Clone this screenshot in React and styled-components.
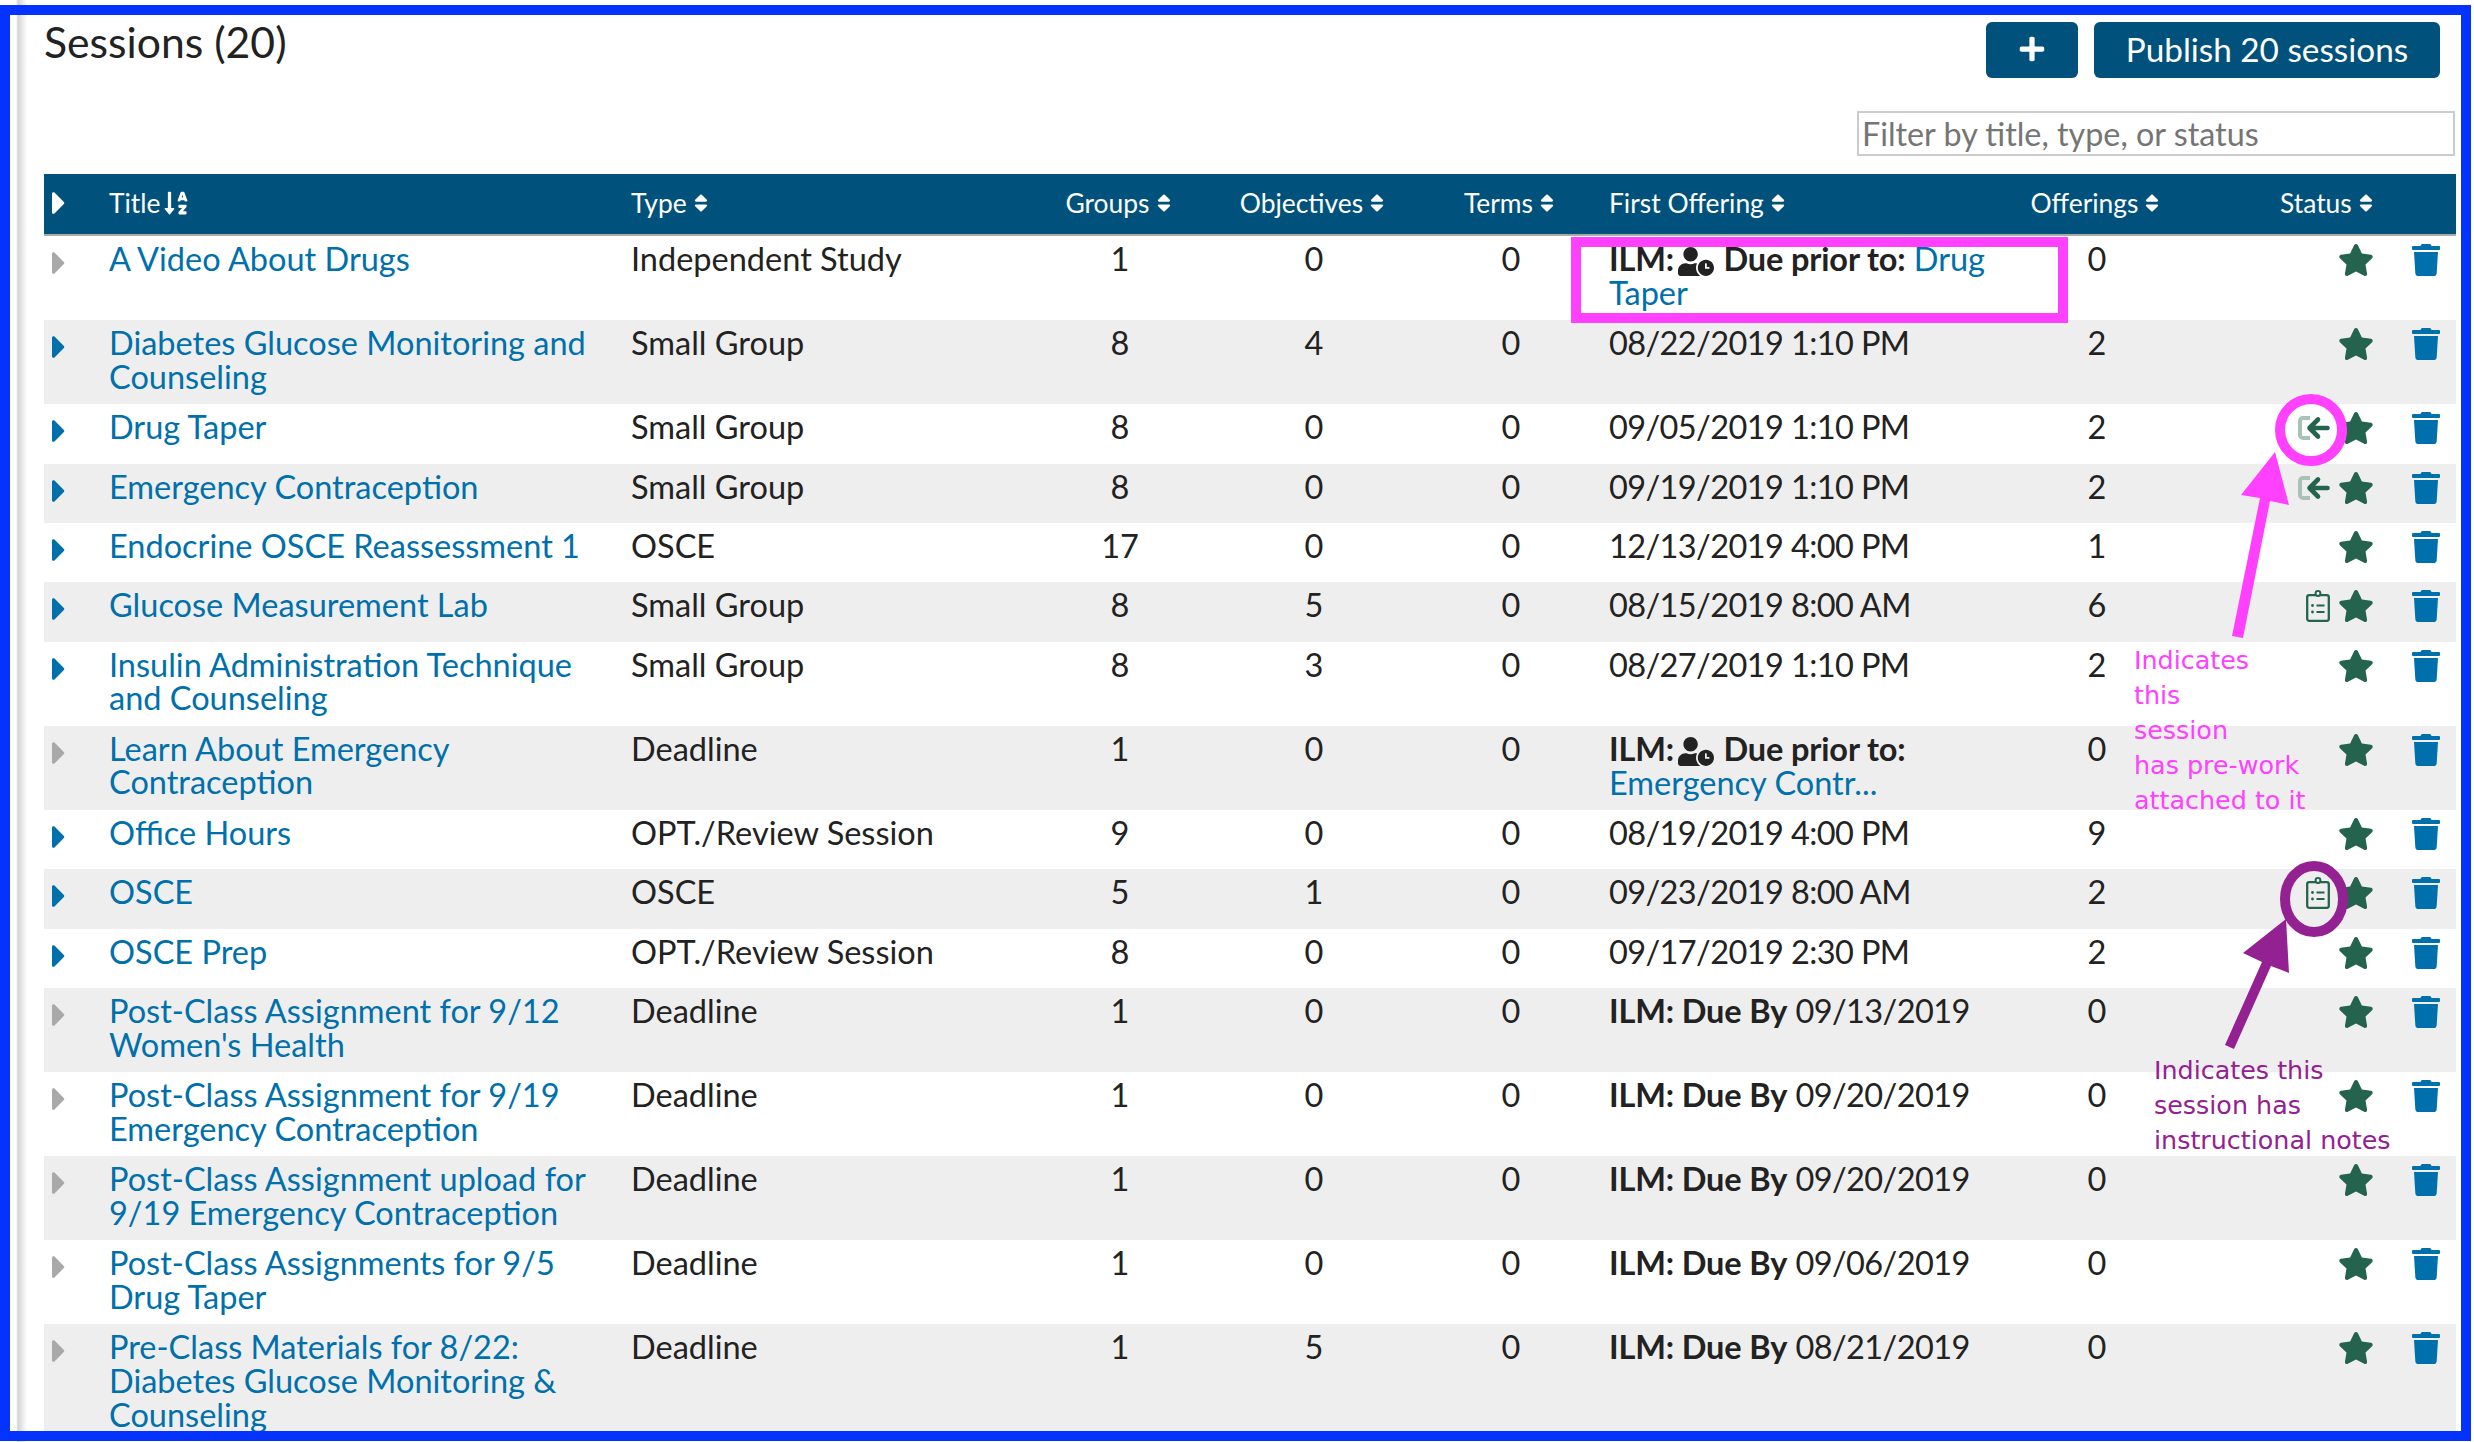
import React from 'react';
import styled, { createGlobalStyle } from 'styled-components';
import { FaCaretRight, FaPlus, FaSort, FaSortAlphaDown, FaStar, FaTrash, FaUserClock } from 'react-icons/fa';

const blue = '#00527c';
const link = '#0070ad';
const green = '#24634d';

const GlobalStyle = createGlobalStyle`
    html, body {
        margin: 0;
        padding: 0;
        background: #fff;
    }
    body {
        font-family: "Lato", "Noto Sans", sans-serif;
        color: #222;
    }
`;

const Page = styled.div`
    position: relative;
    width: 2474px;
    height: 1442px;
    padding-top: 5px;
    box-sizing: border-box;
    overflow: hidden;
    background: linear-gradient(to right, #fff 16px, #d4d4d4 18px, #fff 27px);
`;

const Frame = styled.div`
    width: 2471px;
    height: 1436px;
    box-sizing: border-box;
    border: 10px solid #0433ff;
    padding: 7px 5px 0 34px;
    overflow: hidden;
    background: linear-gradient(to right, #fff 6px, #d4d4d4 8px, #fff 17px);
`;

const TopRow = styled.div`
    display: flex;
    justify-content: space-between;
    align-items: flex-start;
    padding-right: 16px;
`;

const Heading = styled.h2`
    margin: 0;
    font-size: 42.700px;
    font-weight: 400;
    line-height: 40px;
`;

const Buttons = styled.div`
    display: flex;
    gap: 16px;
`;

const Button = styled.button`
    display: flex;
    align-items: center;
    justify-content: center;
    height: 56px;
    width: ${p => p.$width};
    padding: 0 0 2px;
    border: none;
    border-radius: 6px;
    background: ${blue};
    color: #fff;
    font-family: inherit;
    font-size: 33.300px;
`;

const FilterRow = styled.div`
    display: flex;
    justify-content: flex-end;
    margin-top: 33px;
    padding-right: 1px;
`;

const FilterInput = styled.input`
    width: 598px;
    height: 45px;
    box-sizing: border-box;
    padding: 0 3px 1px;
    border: 2px solid #ccc;
    font-family: inherit;
    font-size: 32.300px;
    ::placeholder {
        color: #757575;
        opacity: 1;
    }
`;

const columns = '65px 522px 399px 180px 208px 186px 406px 174px 272px';

const HeaderRow = styled.div`
    display: grid;
    grid-template-columns: ${columns};
    align-items: center;
    height: 62px;
    padding-bottom: 2px;
    margin-top: 18px;
    box-sizing: border-box;
    background: ${blue};
    border-bottom: 2px solid #aaa;
    color: #fff;
    font-size: 26.400px;
`;

const HeaderCell = styled.div`
    display: flex;
    align-items: center;
    gap: 3px;
    justify-content: ${p => (p.$center ? 'center' : 'flex-start')};
    padding-left: ${p => p.$indent || '0'};
    svg {
        flex: none;
    }
`;

const Caret = styled(FaCaretRight)`
    display: block;
    width: 14px;
    height: 38px;
    margin-left: 8px;
`;

const Row = styled.div`
    display: grid;
    grid-template-columns: ${columns};
    align-items: start;
    min-height: ${p => (p.$tall ? '84.1px' : '59.4px')};
    background: ${p => (p.$alt ? '#eee' : '#fff')};
    font-size: 32.500px;
    line-height: 33.600px;
`;

const Cell = styled.div`
    padding-top: 6px;
    padding-left: ${p => p.$indent || '0'};
    padding-right: ${p => p.$gutter || '0'};
    text-align: ${p => (p.$center ? 'center' : 'left')};
`;

const Expander = styled.div`
    padding-top: 8px;
    height: 38px;
    color: ${p => (p.$active ? link : '#a9a9a9')};
`;

const TitleLink = styled.a`
    color: ${link};
    text-decoration: none;
`;

const UserIcon = styled(FaUserClock)`
    width: 36px;
    height: 29px;
    vertical-align: -5px;
    margin: 0 2px 0 -4px;
`;

const Strong = styled.strong`
    font-weight: 700;
    letter-spacing: -0.150px;
`;

const DateText = styled.span`
    letter-spacing: -0.600px;
`;

const StatusCell = styled.div`
    display: flex;
    justify-content: flex-end;
    align-items: center;
    padding: 6px 16px 0 0;
    color: ${green};
`;

const Extra = styled.div`
    display: flex;
    justify-content: flex-end;
    margin-right: 8px;
`;

const Trash = styled(FaTrash)`
    width: 28px;
    height: 32px;
    margin-left: 38px;
    color: ${link};
`;

const Overlay = styled.svg`
    position: absolute;
    top: 0;
    left: 0;
    pointer-events: none;
`;

const Note = styled.div`
    position: absolute;
    left: ${p => p.$left};
    top: ${p => p.$top};
    color: ${p => p.$color};
    font-family: "DejaVu Sans", sans-serif;
    font-size: 25.400px;
    line-height: 35px;
    white-space: nowrap;
`;

const PreworkIcon = () => (
    <svg width="32" height="24" viewBox="0 0 32 24" fill="none" strokeLinecap="round" strokeLinejoin="round">
        <path d="M12 2H5a3 3 0 0 0-3 3v14a3 3 0 0 0 3 3h7" stroke="#a9c2b8" strokeWidth="4" strokeLinecap="butt" />
        <path d="M29.500 12H13M20 3.500L11.500 12l8.500 8.500" stroke={green} strokeWidth="4.600" />
    </svg>
);

const NotesIcon = () => (
    <svg width="24" height="32" viewBox="0 0 24 32" fill="none" stroke={green} strokeWidth="2.300">
        <rect x="1.200" y="5.200" width="21.600" height="25.600" rx="2" />
        <circle cx="12" cy="3.500" r="2.400" fill="#fff" strokeWidth="2" />
        <path d="M10.500 15.500h8M10.500 22h8" strokeWidth="2.200" />
        <circle cx="6.500" cy="15.500" r="1.400" fill={green} stroke="none" />
        <circle cx="6.500" cy="22" r="1.400" fill={green} stroke="none" />
    </svg>
);

const sessions = [
    { title: 'A Video About Drugs', type: 'Independent Study', groups: 1, objectives: 0, ilm: 'prior', target: 'Drug Taper', offerings: 0, tall: true },
    { title: 'Diabetes Glucose Monitoring and Counseling', type: 'Small Group', groups: 8, objectives: 4, first: '08/22/2019 1:10 PM', offerings: 2, tall: true },
    { title: 'Drug Taper', type: 'Small Group', groups: 8, objectives: 0, first: '09/05/2019 1:10 PM', offerings: 2, extra: 'prework' },
    { title: 'Emergency Contraception', type: 'Small Group', groups: 8, objectives: 0, first: '09/19/2019 1:10 PM', offerings: 2, extra: 'prework' },
    { title: 'Endocrine OSCE Reassessment 1', type: 'OSCE', groups: 17, objectives: 0, first: '12/13/2019 4:00 PM', offerings: 1 },
    { title: 'Glucose Measurement Lab', type: 'Small Group', groups: 8, objectives: 5, first: '08/15/2019 8:00 AM', offerings: 6, extra: 'notes' },
    { title: 'Insulin Administration Technique and Counseling', type: 'Small Group', groups: 8, objectives: 3, first: '08/27/2019 1:10 PM', offerings: 2, tall: true },
    { title: 'Learn About Emergency Contraception', type: 'Deadline', groups: 1, objectives: 0, ilm: 'prior', target: 'Emergency Contr...', offerings: 0, tall: true },
    { title: 'Office Hours', type: 'OPT./Review Session', groups: 9, objectives: 0, first: '08/19/2019 4:00 PM', offerings: 9 },
    { title: 'OSCE', type: 'OSCE', groups: 5, objectives: 1, first: '09/23/2019 8:00 AM', offerings: 2, extra: 'notes' },
    { title: 'OSCE Prep', type: 'OPT./Review Session', groups: 8, objectives: 0, first: '09/17/2019 2:30 PM', offerings: 2 },
    { title: "Post-Class Assignment for 9/12 Women's Health", type: 'Deadline', groups: 1, objectives: 0, ilm: 'by', due: '09/13/2019', offerings: 0, tall: true },
    { title: 'Post-Class Assignment for 9/19 Emergency Contraception', type: 'Deadline', groups: 1, objectives: 0, ilm: 'by', due: '09/20/2019', offerings: 0, tall: true },
    { title: 'Post-Class Assignment upload for 9/19 Emergency Contraception', type: 'Deadline', groups: 1, objectives: 0, ilm: 'by', due: '09/20/2019', offerings: 0, tall: true },
    { title: 'Post-Class Assignments for 9/5 Drug Taper', type: 'Deadline', groups: 1, objectives: 0, ilm: 'by', due: '09/06/2019', offerings: 0, tall: true },
    { title: 'Pre-Class Materials for 8/22: Diabetes Glucose Monitoring & Counseling', type: 'Deadline', groups: 1, objectives: 5, ilm: 'by', due: '08/21/2019', offerings: 0, tall: true },
];

const FirstOffering = ({ session }) => {
    if (session.ilm === 'prior') {
        return (
            <>
                <Strong>ILM: <UserIcon /> Due prior to:</Strong> <TitleLink>{session.target}</TitleLink>
            </>
        );
    }
    if (session.ilm === 'by') {
        return (
            <>
                <Strong>ILM: Due By</Strong> <DateText>{session.due}</DateText>
            </>
        );
    }
    return <DateText>{session.first}</DateText>;
};

const App = () => (
    <Page>
        <GlobalStyle />
        <Frame>
            <TopRow>
                <Heading>Sessions (20)</Heading>
                <Buttons>
                    <Button $width="92px"><FaPlus size={28} /></Button>
                    <Button $width="346px">Publish 20 sessions</Button>
                </Buttons>
            </TopRow>
            <FilterRow>
                <FilterInput placeholder="Filter by title, type, or status" />
            </FilterRow>
            <HeaderRow>
                <HeaderCell><Caret /></HeaderCell>
                <HeaderCell>Title <FaSortAlphaDown size={26} /></HeaderCell>
                <HeaderCell>Type <FaSort size={22} /></HeaderCell>
                <HeaderCell $center>Groups <FaSort size={22} /></HeaderCell>
                <HeaderCell $center>Objectives <FaSort size={22} /></HeaderCell>
                <HeaderCell $center>Terms <FaSort size={22} /></HeaderCell>
                <HeaderCell $indent="5px">First Offering <FaSort size={22} /></HeaderCell>
                <HeaderCell $center>Offerings <FaSort size={22} /></HeaderCell>
                <HeaderCell $indent="96px">Status <FaSort size={22} /></HeaderCell>
            </HeaderRow>
            {sessions.map((session, i) => (
                <Row key={session.title} $alt={i % 2 === 1} $tall={session.tall}>
                    <Expander $active={session.offerings > 0}><Caret /></Expander>
                    <Cell $gutter="24px"><TitleLink>{session.title}</TitleLink></Cell>
                    <Cell>{session.type}</Cell>
                    <Cell $center>{session.groups}</Cell>
                    <Cell $center>{session.objectives}</Cell>
                    <Cell $center>0</Cell>
                    <Cell $indent="5px"><FirstOffering session={session} /></Cell>
                    <Cell $center>{session.offerings}</Cell>
                    <StatusCell>
                        {session.extra && (
                            <Extra>{session.extra === 'prework' ? <PreworkIcon /> : <NotesIcon />}</Extra>
                        )}
                        <FaStar size={36} />
                        <Trash />
                    </StatusCell>
                </Row>
            ))}
        </Frame>
        <Overlay width="2474" height="1442" viewBox="0 0 2474 1442" fill="none">
            <rect x="1576" y="242" width="487" height="76" stroke="#ff40ff" strokeWidth="10" />
            <circle cx="2311" cy="430" r="31" stroke="#ff40ff" strokeWidth="10" />
            <polygon points="2275,452 2289,505 2270,501 2243,638 2232,636 2260,498 2241,495" fill="#ff40ff" />
            <ellipse cx="2314" cy="899" rx="29" ry="33" stroke="#942192" strokeWidth="10" />
            <polygon points="2286,919 2289,973 2271,966 2234,1049 2225,1045 2262,962 2243,953" fill="#942192" />
        </Overlay>
        <Note $left="2134px" $top="643px" $color="#ff40ff">Indicates<br />this<br />session<br />has pre-work<br />attached to it</Note>
        <Note $left="2154px" $top="1053px" $color="#942192">Indicates this<br />session has<br />instructional notes</Note>
    </Page>
);

export default App;
